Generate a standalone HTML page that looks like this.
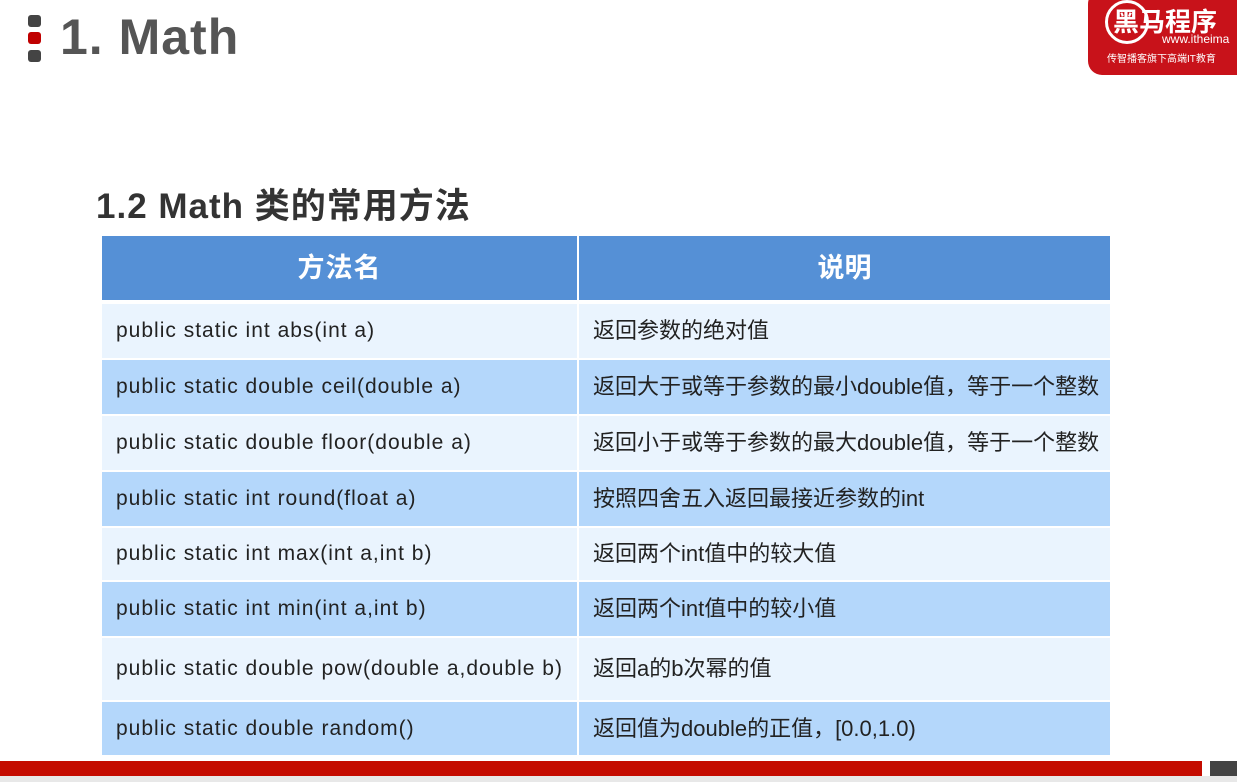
<!DOCTYPE html>
<html><head><meta charset="utf-8"><style>
body{margin:0;width:1237px;height:782px;background:#fff;position:relative;overflow:hidden;font-family:"Liberation Sans","Noto Sans CJK SC",sans-serif}
.a{position:absolute}
.sq{position:absolute;left:28px;width:13px;height:12px;border-radius:3px;background:#444}
.r{position:absolute;left:102px;width:1008px;}
.c{position:absolute;top:0;bottom:0;display:flex;align-items:center;font-size:21px;line-height:24px;color:#222}
.c1{left:0;width:475px;padding-left:14px;box-sizing:border-box;letter-spacing:1px}
.c2{left:477px;right:0;padding-left:14px;font-size:22px;letter-spacing:0px}
.l{background:#eaf4fe}.b{background:#b4d7fb}
</style></head><body>
<div class="sq" style="top:15px"></div><div class="sq" style="top:32px;background:#c00000"></div><div class="sq" style="top:50px"></div>
<div class="a" style="left:60px;top:8px;font-size:50px;font-weight:bold;color:#555;letter-spacing:1px">1. Math</div>
<div class="a" style="left:1088px;top:-10px;width:170px;height:85px;background:#c8121a;border-radius:14px"></div>
<div class="a" style="left:1105px;top:0px;width:44px;height:44px;border:3px solid #fff;border-radius:50%;box-sizing:border-box"></div>
<div class="a" style="left:1113px;top:2px;font-size:26px;color:#fff;font-weight:bold">黑马程序</div>
<div class="a" style="left:1162px;top:32px;font-size:12px;color:#fff">www.itheima</div>
<div class="a" style="left:1107px;top:50px;font-size:10px;color:#fff">传智播客旗下高端IT教育</div>
<div class="a" style="left:96px;top:178px;font-size:35px;font-weight:bold;color:#333;letter-spacing:1px">1.2 Math 类的常用方法</div>
<div class="r" style="top:236px;height:64px;background:#5590d6"><div class="c c1" style="justify-content:center;padding:0;color:#fff;font-weight:bold;font-size:27px">方法名</div><div class="c c2" style="justify-content:center;padding:0;color:#fff;font-weight:bold;font-size:27px;border-left:2px solid #fff;left:475px">说明</div></div>
<div class="r l" style="top:304px;height:54px"><div class="c c1">public static int abs(int a)</div><div class="c c2">返回参数的绝对值</div></div>
<div class="r b" style="top:360px;height:54px"><div class="c c1">public static double ceil(double a)</div><div class="c c2">返回大于或等于参数的最小double值，等于一个整数</div></div>
<div class="r l" style="top:416px;height:54px"><div class="c c1">public static double floor(double a)</div><div class="c c2">返回小于或等于参数的最大double值，等于一个整数</div></div>
<div class="r b" style="top:472px;height:54px"><div class="c c1">public static int round(float a)</div><div class="c c2">按照四舍五入返回最接近参数的int</div></div>
<div class="r l" style="top:528px;height:52px"><div class="c c1">public static int max(int a,int b)</div><div class="c c2">返回两个int值中的较大值</div></div>
<div class="r b" style="top:582px;height:54px"><div class="c c1">public static int min(int a,int b)</div><div class="c c2">返回两个int值中的较小值</div></div>
<div class="r l" style="top:638px;height:62px"><div class="c c1">public static double pow(double a,double b)</div><div class="c c2">返回a的b次幂的值</div></div>
<div class="r b" style="top:702px;height:53px"><div class="c c1">public static double random()</div><div class="c c2">返回值为double的正值，[0.0,1.0)</div></div>
<div class="a" style="left:577px;top:304px;width:2px;height:451px;background:#fff"></div>
<div class="a" style="left:0;top:761px;width:1202px;height:15px;background:#c40c00"></div>
<div class="a" style="left:1210px;top:761px;width:27px;height:15px;background:#444"></div>
<div class="a" style="left:0;top:776px;width:1237px;height:6px;background:#e8e8e8"></div>
</body></html>
